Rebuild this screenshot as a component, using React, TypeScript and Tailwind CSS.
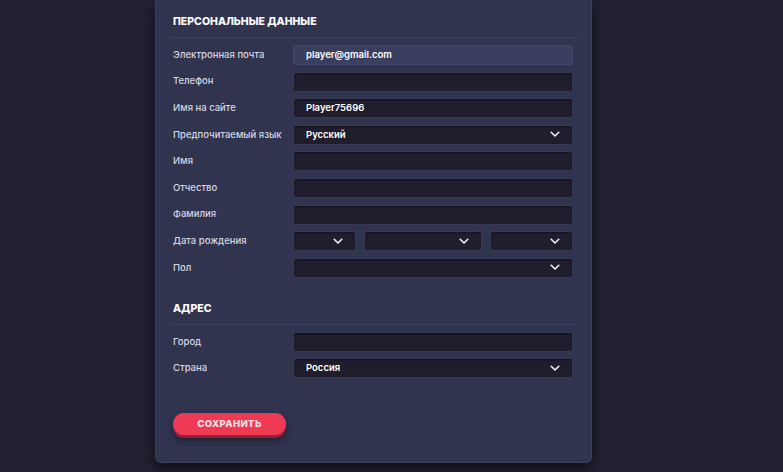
import { ReactNode } from "react";

const font = { fontFamily: "Inter, 'Noto Sans', 'DejaVu Sans', sans-serif" };

function Chevron() {
  return (
    <svg width="10" height="7" viewBox="0 0 10 7" className="shrink-0">
      <path d="M1.2 1.3 L5 5 L8.8 1.3" fill="none" stroke="#f2f2f7" strokeWidth="1.6" strokeLinecap="round" strokeLinejoin="round" />
    </svg>
  );
}

function Field({ value, muted, select, className = "" }: { value?: string; muted?: boolean; select?: boolean; className?: string }) {
  return (
    <div
      className={`flex h-5 items-center justify-between rounded-[3px] border px-3 ${
        muted ? "border-[#42466a] bg-[#3a3e5f]" : "border-[#363a55] bg-[#201d2d] shadow-[inset_0_1px_2px_rgba(0,0,0,0.5)]"
      } ${className}`}
    >
      <span className="text-[9.5px] font-semibold text-white">{value}</span>
      {select && <Chevron />}
    </div>
  );
}

function Row({ label, children }: { label: string; children: ReactNode }) {
  return (
    <div className="flex items-center">
      <div className="w-[120px] shrink-0 text-[9.5px] font-medium text-[#d6d6e2]">{label}</div>
      <div className="flex-1">{children}</div>
    </div>
  );
}

function Section({ title, children }: { title: string; children: ReactNode }) {
  return (
    <div>
      <h2 className="text-[10.5px] font-extrabold leading-[14px] text-white">{title}</h2>
      <div className="-mx-[4px] mt-[8px] h-px bg-[#3d4160]" />
      <div className="mt-[7px] flex flex-col gap-[6.6px]">{children}</div>
    </div>
  );
}

export default function App() {
  return (
    <div style={font} className="h-[472px] w-[783px] overflow-hidden bg-[#222033]">
      <div className="ml-[155px] w-[437px] rounded-b-[6px] border-x border-b border-[#3b3f5e] bg-[#30344f] pb-[27px] pl-[17px] pr-[18px] pt-[15px] shadow-[0_6px_14px_rgba(0,0,0,0.55)]">
        <Section title="ПЕРСОНАЛЬНЫЕ ДАННЫЕ">
          <Row label="Электронная почта">
            <Field value="player@gmail.com" muted />
          </Row>
          <Row label="Телефон">
            <Field />
          </Row>
          <Row label="Имя на сайте">
            <Field value="Player75696" />
          </Row>
          <Row label="Предпочитаемый язык">
            <Field value="Русский" select />
          </Row>
          <Row label="Имя">
            <Field />
          </Row>
          <Row label="Отчество">
            <Field />
          </Row>
          <Row label="Фамилия">
            <Field />
          </Row>
          <Row label="Дата рождения">
            <div className="flex gap-[8px]">
              <Field select className="w-[63px]" />
              <Field select className="w-[118px]" />
              <Field select className="flex-1" />
            </div>
          </Row>
          <Row label="Пол">
            <Field select />
          </Row>
        </Section>

        <div className="mt-[24px]">
          <Section title="АДРЕС">
            <Row label="Город">
              <Field />
            </Row>
            <Row label="Страна">
              <Field value="Россия" select />
            </Row>
          </Section>
        </div>

        <button className="mt-[35px] flex h-[22px] w-[113px] items-center justify-center rounded-full bg-[#ee3a55] text-[9.5px] font-extrabold tracking-[0.04em] text-[#fbe3e8] shadow-[0_3px_0_#9b1f36,0_5px_8px_rgba(0,0,0,0.45)]">
          СОХРАНИТЬ
        </button>
      </div>
    </div>
  );
}
